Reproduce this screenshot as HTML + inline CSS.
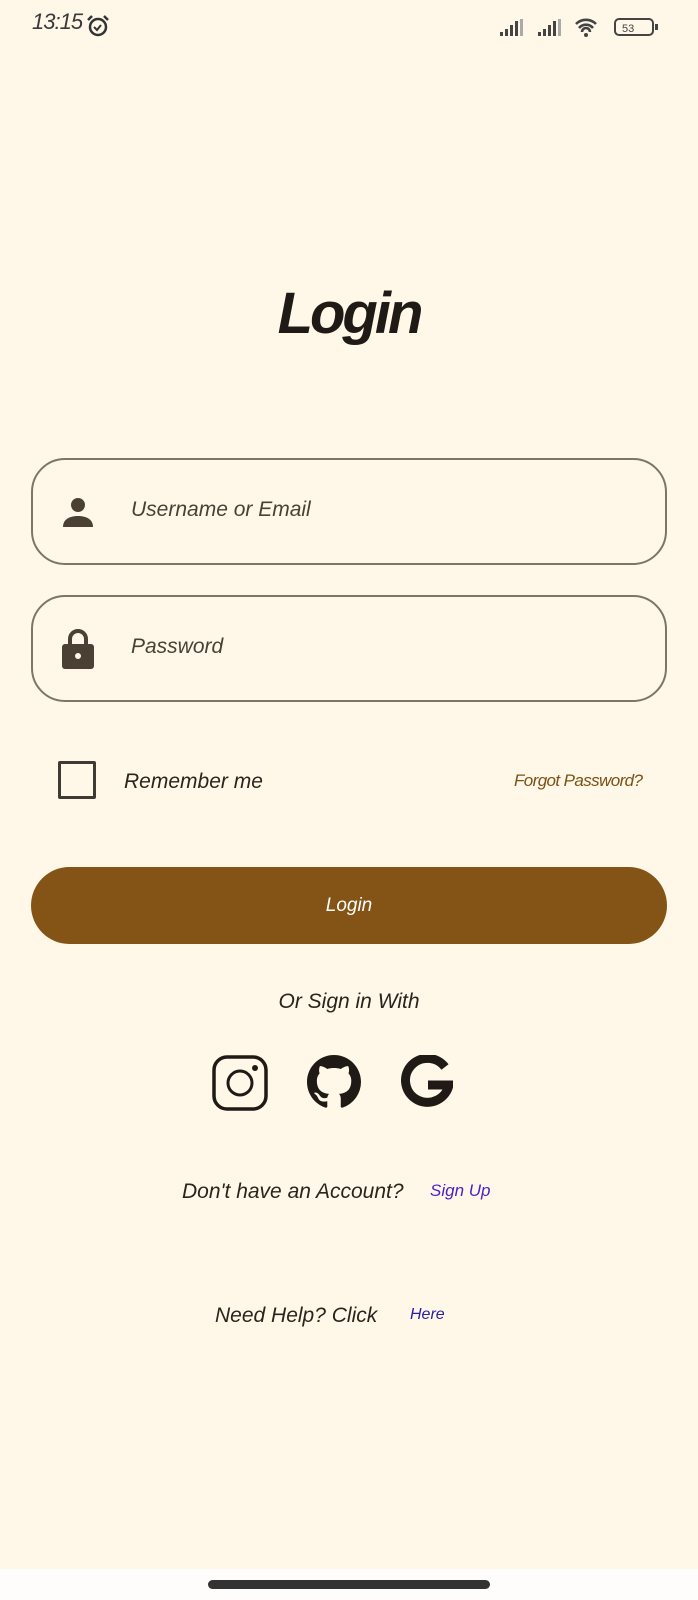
<!DOCTYPE html>
<html><head><meta charset="utf-8"><style>
*{margin:0;padding:0;box-sizing:border-box}
body{width:698px;height:1600px;background:#fff8e9;position:relative;overflow:hidden;font-family:"Liberation Sans",sans-serif;color:#2a241d}
.a{position:absolute}
.hand{font-style:italic}
.field{position:absolute;left:31px;width:636px;height:107px;border:2px solid #7d7567;border-radius:34px}
.field span{position:absolute;left:98px;top:38px;font-size:21px;font-style:italic;color:#4a4136}
</style></head><body>
<div class="a" style="left:32px;top:9px;font-size:22px;font-style:italic;color:#3a3a3a;letter-spacing:-1px;font-family:'Liberation Sans Narrow','Liberation Sans',sans-serif">13:15</div>
<svg class="a" style="left:85px;top:13px" width="26" height="26" viewBox="0 0 26 26"><circle cx="13" cy="14" r="8" fill="none" stroke="#333" stroke-width="2.5"/><path d="M9 14l3 3 4-5" fill="none" stroke="#333" stroke-width="2"/><path d="M3 7l4-4M23 7l-4-4" stroke="#333" stroke-width="2.5"/></svg>
<svg class="a" style="left:500px;top:16px" width="165" height="22" viewBox="0 0 165 22">
<g fill="#444"><rect x="0" y="16" width="3" height="4"/><rect x="5" y="13" width="3" height="7"/><rect x="10" y="9" width="3" height="11"/><rect x="15" y="5" width="3" height="15"/><rect x="20" y="3" width="3" height="17" fill="#aaa"/>
<rect x="38" y="16" width="3" height="4"/><rect x="43" y="13" width="3" height="7"/><rect x="48" y="9" width="3" height="11"/><rect x="53" y="5" width="3" height="15"/><rect x="58" y="3" width="3" height="17" fill="#aaa"/></g>
<path d="M76 8a14 14 0 0 1 20 0M79 12a9 9 0 0 1 14 0M82 16a4 4 0 0 1 8 0" fill="none" stroke="#444" stroke-width="2.6"/><circle cx="86" cy="19" r="2" fill="#444"/>
<rect x="115" y="3" width="38" height="16" rx="4" fill="none" stroke="#444" stroke-width="2"/><rect x="155" y="8" width="3" height="6" fill="#444"/><text x="122" y="16" font-size="11" fill="#444" font-family="Liberation Sans">53</text></svg>
<div class="a hand" style="left:0;width:698px;text-align:center;top:280px;font-size:58px;font-weight:bold;color:#1f1a15;letter-spacing:-3px">Login</div>
<div class="field" style="top:458px"><svg class="a" style="left:28px;top:35px" width="34" height="34" viewBox="0 0 34 34"><circle cx="17" cy="10" r="7" fill="#4a4034"/><path d="M2 32c0-8 7-11 15-11s15 3 15 11z" fill="#4a4034"/></svg><span>Username or Email</span></div>
<div class="field" style="top:595px"><svg class="a" style="left:28px;top:30px" width="34" height="42" viewBox="0 0 34 42"><path d="M9 18v-6a8 8 0 0 1 16 0v6" fill="none" stroke="#4a4034" stroke-width="4"/><rect x="1" y="17" width="32" height="25" rx="3" fill="#4a4034"/><circle cx="17" cy="29" r="3" fill="#fff8e9"/></svg><span>Password</span></div>
<div class="a" style="left:58px;top:761px;width:38px;height:38px;border:3px solid #3f3a33;border-radius:2px"></div>
<div class="a hand" style="left:124px;top:770px;font-size:21px;color:#2a241d">Remember me</div>
<div class="a hand" style="left:514px;top:771px;font-size:17px;letter-spacing:-0.6px;color:#7a5114">Forgot Password?</div>
<div class="a" style="left:31px;top:867px;width:636px;height:77px;border-radius:39px;background:#835415;color:#fff;text-align:center;line-height:77px;font-size:19px;font-style:italic">Login</div>
<div class="a hand" style="left:0;width:698px;text-align:center;top:990px;font-size:21px">Or Sign in With</div>
<svg class="a" style="left:212px;top:1055px" width="56" height="56" viewBox="0 0 56 56"><rect x="2" y="2" width="52" height="52" rx="13" fill="none" stroke="#1f1a15" stroke-width="3.5"/><circle cx="28" cy="28" r="12" fill="none" stroke="#1f1a15" stroke-width="3"/><circle cx="43" cy="13" r="3" fill="#1f1a15"/></svg>
<svg class="a" style="left:307px;top:1055px" width="54" height="54" viewBox="0 0 16 16"><path fill="#1f1a15" d="M8 0C3.58 0 0 3.58 0 8c0 3.540 2.29 6.53 5.47 7.59.4.07.55-.17.55-.38 0-.19-.01-.82-.01-1.49-2.01.37-2.53-.49-2.690-.94-.09-.23-.48-.94-.82-1.13-.28-.15-.68-.52-.01-.53.63-.01 1.08.58 1.23.82.72 1.21 1.87.87 2.33.66.07-.52.28-.87.51-1.07-1.78-.2-3.640-.89-3.640-3.95 0-.87.31-1.59.82-2.15-.08-.2-.36-1.02.08-2.12 0 0 .67-.21 2.2.82.64-.18 1.32-.27 2-.27.68 0 1.36.09 2 .27 1.53-1.04 2.2-.82 2.2-.82.44 1.1.16 1.92.08 2.12.51.56.82 1.27.82 2.15 0 3.07-1.87 3.75-3.65 3.95.29.25.54.73.54 1.48 0 1.07-.01 1.93-.01 2.2 0 .21.15.46.55.38A8.013 8.013 0 0016 8c0-4.42-3.58-8-8-8z"/></svg>
<svg class="a" style="left:401px;top:1055px" width="52" height="54" viewBox="0 0 52 54"><path d="M44 12A22 22 0 1 0 48 30H27" fill="none" stroke="#1f1a15" stroke-width="9"/></svg>
<div class="a hand" style="left:182px;top:1180px;font-size:21px">Don't have an Account?</div>
<div class="a hand" style="left:430px;top:1181px;font-size:17px;color:#4a1fc4">Sign Up</div>
<div class="a hand" style="left:215px;top:1304px;font-size:21px">Need Help? Click</div>
<div class="a hand" style="left:410px;top:1306px;font-size:16px;color:#2a1fa0">Here</div>
<div class="a" style="left:0;top:1569px;width:698px;height:31px;background:#fffdfb"></div>
<div class="a" style="left:208px;top:1580px;width:282px;height:9px;border-radius:5px;background:#333"></div>
</body></html>
